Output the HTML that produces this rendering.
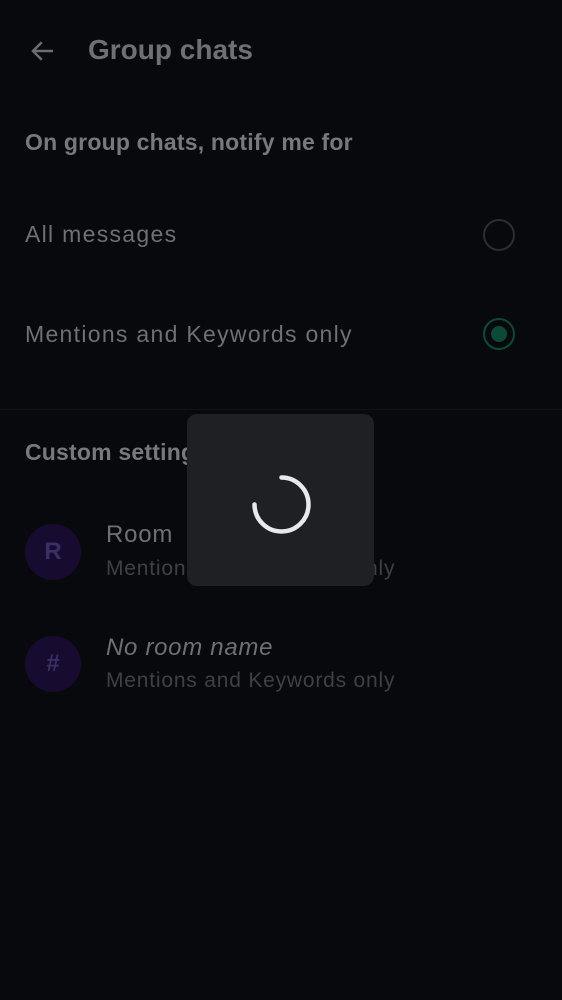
<!DOCTYPE html>
<html><head><meta charset="utf-8"><style>
body{margin:0;width:562px;height:1000px;background:#08090c;font-family:"Liberation Sans",sans-serif;position:relative;overflow:hidden}
.t{position:absolute;white-space:nowrap}
</style></head><body>
<svg class="t" style="left:28px;top:36px" width="30" height="30" viewBox="0 0 24 24"><path d="M20 12H5M11 5l-7 7 7 7" fill="none" stroke="#6b6d71" stroke-width="2"/></svg>
<div class="t" style="left:88px;top:34px;font-size:28px;color:#6e7074;font-weight:bold;letter-spacing:0px">Group chats</div>
<div class="t" style="left:25px;top:129px;font-size:23px;color:#77797d;font-weight:bold;letter-spacing:0.2px">On group chats, notify me for</div>
<div class="t" style="left:25px;top:221px;font-size:23px;color:#6e7074;letter-spacing:1.3px">All messages</div>
<div class="t" style="left:483px;top:219px;width:32px;height:32px;border:2.5px solid #2c2e32;border-radius:50%;box-sizing:border-box"></div>
<div class="t" style="left:25px;top:321px;font-size:23px;color:#6e7074;letter-spacing:1.3px">Mentions and Keywords only</div>
<div class="t" style="left:483px;top:318px;width:32px;height:32px;border:2.5px solid #0b4a37;border-radius:50%;box-sizing:border-box"><div style="position:absolute;left:5.5px;top:5.5px;width:16px;height:16px;border-radius:50%;background:#0b4a37"></div></div>
<div class="t" style="left:0;top:409px;width:562px;height:1px;background:#111317"></div>
<div class="t" style="left:25px;top:439px;font-size:23px;color:#77797d;font-weight:bold;letter-spacing:0.2px">Custom settings</div>
<div class="t" style="left:25px;top:524px;width:56px;height:56px;border-radius:50%;background:#170c30;color:#3a2e66;font-size:24px;font-weight:bold;text-align:center;line-height:56px">R</div>
<div class="t" style="left:106px;top:521px;font-size:24px;color:#6e7074;letter-spacing:0.8px">Room</div>
<div class="t" style="left:106px;top:557px;font-size:21px;color:#3e4044;letter-spacing:0.8px">Mentions and Keywords only</div>
<div class="t" style="left:25px;top:636px;width:56px;height:56px;border-radius:50%;background:#170c30;color:#3a2e66;font-size:24px;font-weight:bold;text-align:center;line-height:56px">#</div>
<div class="t" style="left:106px;top:634px;font-size:24px;color:#6e7074;font-style:italic;letter-spacing:0.7px">No room name</div>
<div class="t" style="left:106px;top:669px;font-size:21px;color:#3e4044;letter-spacing:0.8px">Mentions and Keywords only</div>
<div class="t" style="left:187px;top:414px;width:187px;height:172px;background:#1f2024;border-radius:10px"></div>
<svg class="t" style="left:0;top:0" width="562" height="1000"><path d="M281.5 477.5 A27 27 0 1 1 254.5 504.5" fill="none" stroke="#e8e9ec" stroke-width="4.5" stroke-linecap="round"/></svg>
</body></html>
